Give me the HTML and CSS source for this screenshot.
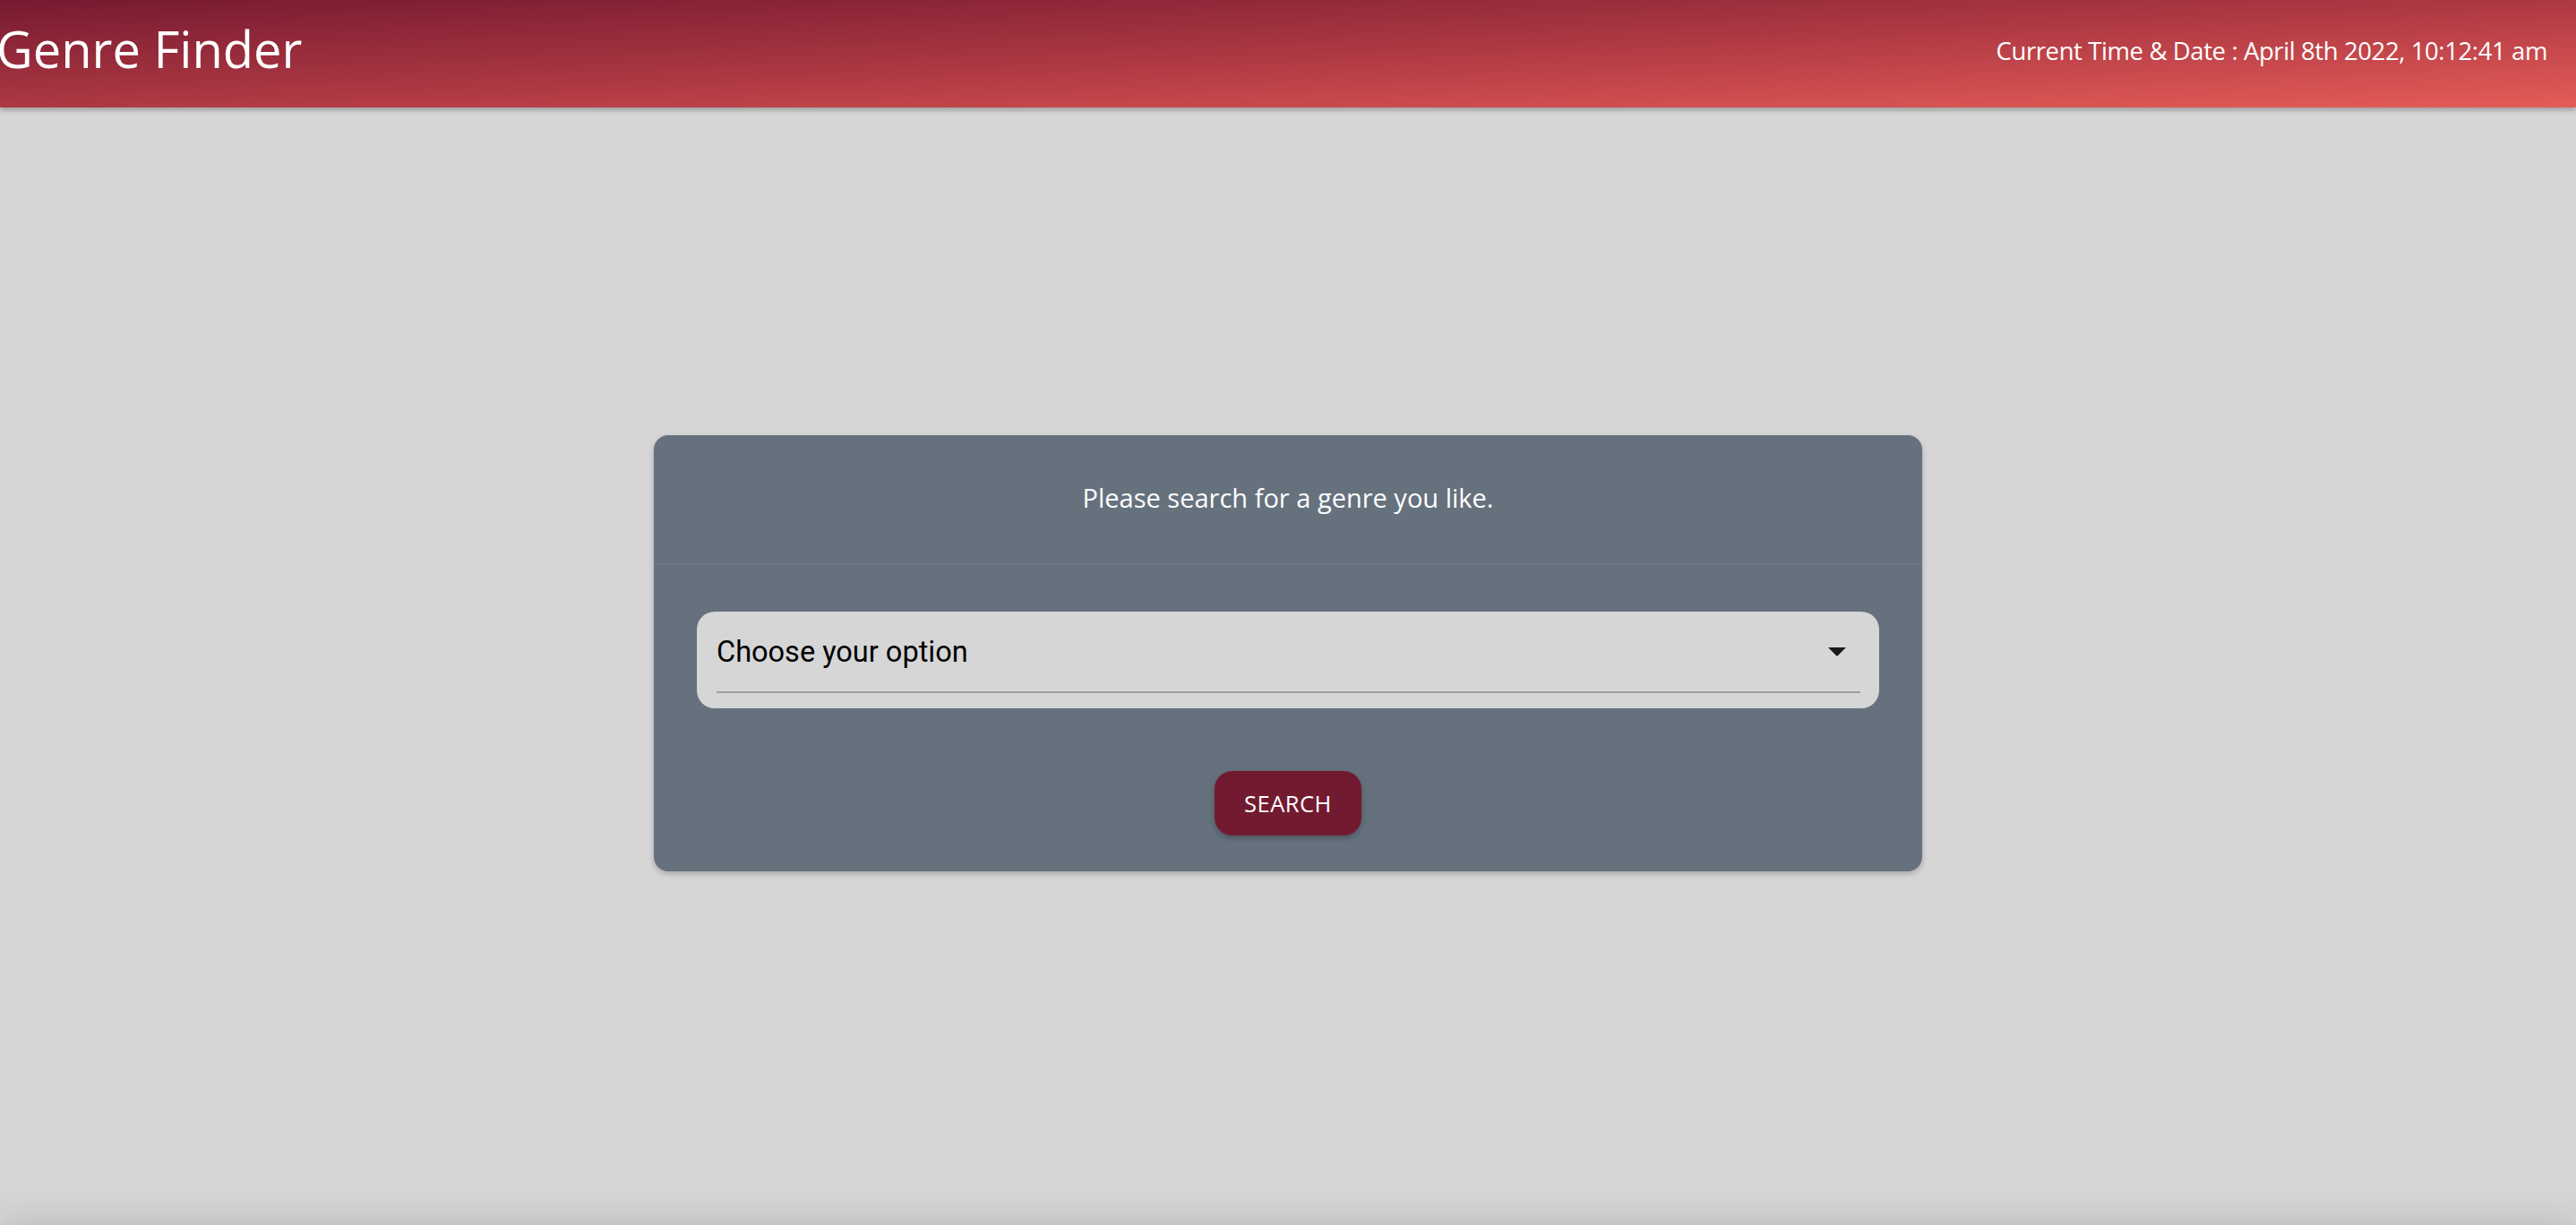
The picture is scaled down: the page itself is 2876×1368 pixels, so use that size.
FILE: index.html
```html
<!DOCTYPE html>
<html lang="en">
<head>
<meta charset="utf-8">
<title>Genre Finder</title>
<link rel="stylesheet" href="styles.css">
</head>
<body>
<header class="topbar">
  <h1 class="brand">Genre Finder</h1>
  <div class="clock">Current Time &amp; Date : April 8th 2022, 10:12:41 am</div>
</header>
<main class="stage">
  <section class="card">
    <div class="card-head">Please search for a genre you like.</div>
    <div class="card-body">
      <div class="select">
        <span class="select-label">Choose your option</span>
        <svg class="select-caret" width="20" height="10" viewBox="0 0 20 10"><path d="M0 0 L20 0 L10 10 Z" fill="#1a1a1a"/></svg>
        <span class="select-line"></span>
      </div>
      <button class="btn">SEARCH</button>
    </div>
  </section>
</main>
<footer class="foot"></footer>
</body>
</html>
```
FILE: styles.css
```css
html, body {
  margin: 0;
  padding: 0;
}
body {
  background: #d6d6d6;
  font-family: "Open Sans", "Noto Sans", sans-serif;
  overflow: hidden;
}
.topbar {
  height: 120px;
  display: flex;
  align-items: center;
  justify-content: space-between;
  padding: 0 32px 0 0;
  background: linear-gradient(to bottom right, #761a30 0%, #ad3843 50%, #e45c57 100%);
  box-shadow: 0 3px 6px rgba(0,0,0,0.28);
  color: #fff;
  position: relative;
  z-index: 2;
}
.brand {
  margin: 0 0 12px -4px;
  font-weight: 400;
  font-size: 56px;
  letter-spacing: 0;
}
.clock {
  font-size: 27.5px;
  letter-spacing: -0.4px;
  margin-bottom: 8px;
}
.stage {
  height: 1248px;
  display: flex;
  align-items: center;
  justify-content: center;
  padding-bottom: 30px;
  box-sizing: border-box;
}
.card {
  width: 1416px;
  background: #66717e;
  border-radius: 16px;
  box-shadow: 0 3px 6px rgba(0,0,0,0.22);
  color: #fff;
}
.card-head {
  height: 145px;
  display: flex;
  align-items: center;
  justify-content: center;
  font-size: 29px;
  border-bottom: 2px solid #6c7882;
  padding-bottom: 4px;
  box-sizing: border-box;
}
.card-body {
  padding: 52px 48px 40px;
  display: flex;
  flex-direction: column;
  align-items: center;
  gap: 70px;
}
.select {
  align-self: stretch;
  height: 108px;
  background: #d6d6d6;
  border-radius: 20px;
  display: flex;
  align-items: center;
  padding: 0 22px;
  position: relative;
  color: #000;
  font-family: "Roboto", "Liberation Sans", sans-serif;
}
.select-label {
  flex: 1;
  font-size: 32.5px;
  margin-top: -18px;
}
.select-caret {
  margin: -18px 15px 0 0;
}
.select-line {
  position: absolute;
  left: 22px;
  right: 21px;
  bottom: 17px;
  height: 2px;
  background: #9e9e9e;
}
.btn {
  width: 164px;
  height: 72px;
  border: none;
  border-radius: 20px;
  background: #721a2f;
  color: #fff;
  font-family: "Open Sans", "Noto Sans", sans-serif;
  font-size: 25.5px;
  font-weight: 500;
  letter-spacing: 0.5px;
  box-shadow: 0 3px 6px rgba(0,0,0,0.25);
  padding: 0;
}
.foot {
  height: 80px;
  background: #d6d6d6;
  box-shadow: 0 -6px 40px rgba(0,0,0,0.12);
}
```
